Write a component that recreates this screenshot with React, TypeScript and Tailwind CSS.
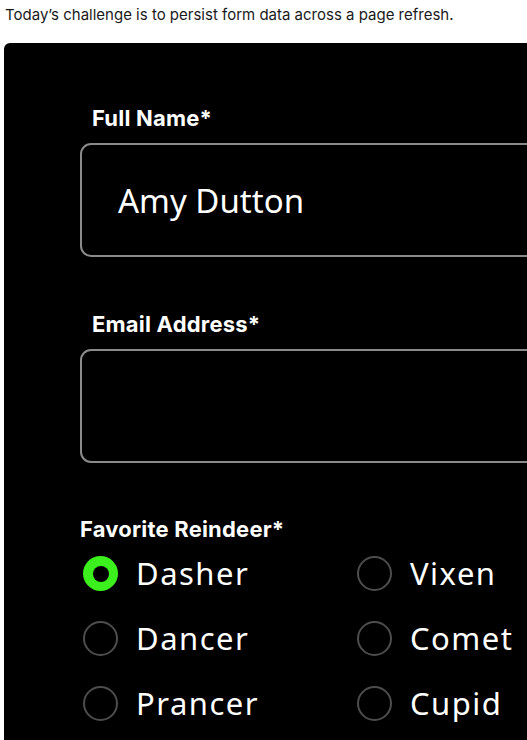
import React, { useState } from 'react';

const reindeer = [
    ['Dasher', 'Vixen'],
    ['Dancer', 'Comet'],
    ['Prancer', 'Cupid'],
];

const Radio = ({ label, checked, onPick }: { label: string; checked: boolean; onPick: () => void }) => (
    <label className="flex items-center h-[65px] cursor-pointer" onClick={onPick}>
        {checked ? (
            <span className="w-[35px] h-[35px] rounded-full bg-[#3cf01e] flex items-center justify-center shrink-0">
                <span className="w-[16px] h-[16px] rounded-full bg-black" />
            </span>
        ) : (
            <span className="w-[35px] h-[35px] rounded-full border-2 border-[#4d4d4d] shrink-0" />
        )}
        <span className="ml-[18px] text-[31px] tracking-[1.5px] text-white font-['Noto_Sans',sans-serif] leading-none">{label}</span>
    </label>
);

export default function App() {
    const [picked, setPicked] = useState('Dasher');

    return (
        <div className="w-[527px] h-[740px] overflow-hidden bg-white">
            <p className="pl-[5px] pt-[6px] text-[15px] leading-[18px] text-[#1a1a1a] font-['Inter',sans-serif]">
                Today’s challenge is to persist form data across a page refresh.
            </p>

            <div className="ml-[4px] mt-[19px] w-[700px] h-[800px] bg-black rounded-tl-[6px] pl-[76px] pt-[62px]">
                {/* Full name */}
                <div className="pl-[12px] text-[22px] leading-[26px] tracking-[0.2px] font-bold text-white font-['Inter',sans-serif]">
                    Full Name*
                </div>
                <div className="mt-[12px] h-[114px] rounded-[11px] border-2 border-[#8a8a8a] flex items-center pl-[36px]">
                    <span className="text-[33px] text-white font-['Noto_Sans',sans-serif] leading-none">Amy Dutton</span>
                </div>

                {/* Email */}
                <div className="mt-[54px] pl-[12px] text-[22px] leading-[26px] tracking-[0.2px] font-bold text-white font-['Inter',sans-serif]">
                    Email Address*
                </div>
                <div className="mt-[12px] h-[114px] rounded-[11px] border-2 border-[#8a8a8a]" />

                {/* Reindeer */}
                <div className="mt-[53px] text-[22px] leading-[26px] tracking-[0.2px] font-bold text-white font-['Inter',sans-serif]">
                    Favorite Reindeer*
                </div>
                <div className="mt-[-1px] pl-[3px] grid grid-cols-[274px_200px]">
                    {reindeer.map((row) =>
                        row.map((name) => (
                            <Radio key={name} label={name} checked={picked === name} onPick={() => setPicked(name)} />
                        ))
                    )}
                </div>
            </div>
        </div>
    );
}
